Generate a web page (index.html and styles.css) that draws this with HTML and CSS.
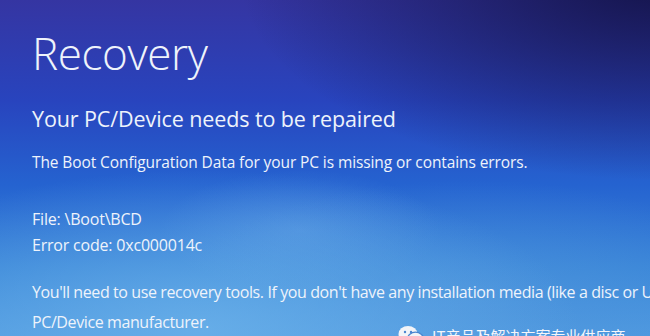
FILE: index.html
```html
<!DOCTYPE html>
<html lang="en">
<head>
<meta charset="utf-8">
<title>Recovery</title>
<link rel="stylesheet" href="styles.css">
</head>
<body>
<main class="screen">
  <h1 class="title">Recovery</h1>
  <h2 class="subtitle">Your PC/Device needs to be repaired</h2>
  <p class="msg">The Boot Configuration Data for your PC is missing or contains errors.</p>
  <div class="details">
    <p class="line">File: \Boot\BCD</p>
    <p class="line">Error code: 0xc000014c</p>
  </div>
  <div class="advice">
    <p class="line2">You'll need to use recovery tools. If you don't have any installation media (like a disc or USB device), contact your system administrator or</p>
    <p class="line2">PC/Device manufacturer.</p>
  </div>
  <div class="watermark">
    <svg class="wx" width="26" height="22" viewBox="0 0 26 22">
      <ellipse cx="10" cy="9" rx="9.5" ry="8" fill="#f2f4f8"/>
      <ellipse cx="17.5" cy="14" rx="8" ry="6.8" fill="#f2f4f8" stroke="#4a86d0" stroke-width="1.2"/>
      <circle cx="7" cy="7" r="1.2" fill="#4a86d0"/>
      <circle cx="13" cy="7" r="1.2" fill="#4a86d0"/>
      <circle cx="15" cy="12.5" r="1" fill="#4a86d0"/>
      <circle cx="20" cy="12.5" r="1" fill="#4a86d0"/>
    </svg>
    <span class="wm-text">IT产品及解决方案专业供应商</span>
  </div>
</main>
</body>
</html>
```

FILE: styles.css
```css
* { box-sizing: border-box; }
html, body {
  margin: 0;
  padding: 0;
  width: 650px;
  height: 336px;
  overflow: hidden;
}
body {
  font-family: "Open Sans", "Noto Sans", sans-serif;
  color: #eef3fb;
}
.screen {
  position: relative;
  width: 650px;
  height: 336px;
  overflow: hidden;
  padding: 23px 0 0 32px;
  white-space: nowrap;
  background:
    radial-gradient(ellipse 420px 200px at 660px -20px, rgba(18,18,70,0.95), rgba(18,18,70,0) 100%),
    radial-gradient(ellipse 380px 160px at 200px 330px, rgba(110,180,235,0.75), rgba(110,180,235,0) 100%),
    radial-gradient(ellipse 300px 120px at 470px 300px, rgba(80,150,220,0.6), rgba(80,150,220,0) 100%),
    radial-gradient(ellipse 140px 60px at 300px 230px, rgba(120,180,235,0.35), rgba(120,180,235,0) 100%),
    linear-gradient(180deg, #3535a2 0%, #2844be 30%, #2563d0 55%, #3a86d8 80%, #4f9ae0 100%);
}
.title {
  margin: 0;
  font-size: 44px;
  font-weight: 300;
  line-height: 60px;
  letter-spacing: -0.4px;
}
.subtitle {
  margin: 21px 0 0;
  font-size: 21.5px;
  font-weight: 400;
  line-height: 30px;
  letter-spacing: -0.1px;
}
.msg {
  margin: 18px 0 0;
  font-size: 15.5px;
  line-height: 20px;
  letter-spacing: -0.1px;
}
.details {
  margin-top: 34px;
}
.line {
  margin: 0;
  font-size: 16px;
  line-height: 26px;
  letter-spacing: -0.2px;
}
.advice {
  margin-top: 19px;
}
.line2 {
  margin: 0;
  font-size: 16px;
  line-height: 30px;
  letter-spacing: -0.4px;
}
.watermark {
  position: absolute;
  left: 398px;
  top: 325px;
  display: flex;
  align-items: center;
  gap: 8px;
}
.wm-text {
  font-family: "Noto Sans CJK SC", sans-serif;
  font-size: 15px;
  line-height: 22px;
  color: #f4f6fa;
}
```
